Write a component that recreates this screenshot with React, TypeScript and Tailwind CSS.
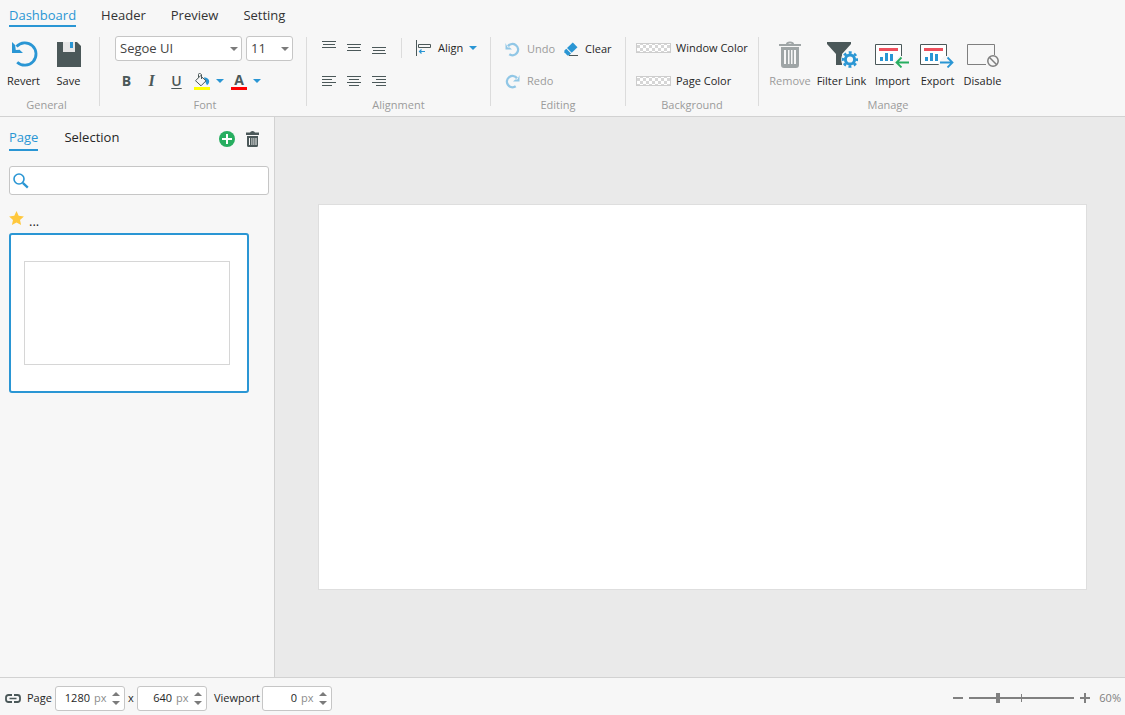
import React, { useState } from 'react'
import clsx from 'clsx'

const DARK = '#4b5859'
const BLUE = '#2a96d4'

/* ---------- icons ---------- */

function RevertIcon() {
  return (
    <svg width="28" height="28" viewBox="0 0 28 28" fill="none">
      <path d="M6.5 6.5A11.2 11.2 0 1 1 7.2 22.200" stroke={BLUE} strokeWidth="2.800" />
      <path d="M2 2v11h11l-3.400-3.200-3.800.2L5.100 5z" fill={BLUE} />
    </svg>
  )
}

function SaveIcon() {
  return (
    <svg width="28" height="28" viewBox="0 0 28 28">
      <path d="M2 2h20l4 4v21H2z" fill={DARK} />
      <path d="M8 2h12v10H8z" fill="#e6e6e6" />
      <path d="M15 2h3v6h-3z" fill={BLUE} />
    </svg>
  )
}

function Caret({ blue = false, className = '' }: { blue?: boolean; className?: string }) {
  return (
    <svg width="8" height="4" viewBox="0 0 8 4" className={clsx('shrink-0', className)}>
      <path d="M0 0h8L4 4z" fill={blue ? BLUE : '#7b7b7b'} />
    </svg>
  )
}

function FillIcon() {
  return (
    <svg width="16" height="17" viewBox="0 0 16 17" fill="none">
      <path d="M10 4.200c3.500.2 5.300 2.100 5.200 4.200-.1 1.500-1 3-2.200 3.800-.7-1.400-1.600-3-2.200-4.700z" fill={BLUE} />
      <path d="M6.500 2.800l5.500 5-5 5-5.500-5.100z" fill="#f7f7f7" stroke={DARK} />
      <path d="M4.500 4.500V1.500Q4.500.5 5.500.5T7.500 1.500V6" stroke={DARK} />
      <path d="M0 14h16v3H0z" fill="#ffff00" />
    </svg>
  )
}

function LinesIcon({ rows }: { rows: [number, number, number][] }) {
  return (
    <svg width="14" height="16" viewBox="0 0 14 16" fill={DARK} shapeRendering="crispEdges">
      {rows.map(([x, y, w]) => (
        <rect key={y} x={x} y={y} width={w} height="1" />
      ))}
    </svg>
  )
}

function AlignObjectsIcon() {
  return (
    <svg width="16" height="16" viewBox="0 0 16 16" fill="none">
      <path d="M.5 0v16M2.500 4.500h12v3h-12z" stroke={DARK} />
      <path d="M3 11.500h6M5.500 9.500l-2 2 2 2" stroke={BLUE} strokeWidth="1.200" />
    </svg>
  )
}

function UndoIcon({ flip = false }: { flip?: boolean }) {
  return (
    <svg width="15" height="15" viewBox="0 0 15 15" fill="none" className={flip ? '-scale-x-100' : ''}>
      <path d="M3 4.200A5.600 5.600 0 1 1 4.300 12.300" stroke="#91c7e6" strokeWidth="2.400" />
      <path d="M.5 1v6.500H7L4.800 5.400 2.600 5.600z" fill="#91c7e6" />
    </svg>
  )
}

function EraserIcon() {
  return (
    <svg width="15" height="15" viewBox="0 0 15 15">
      <path d="M8.800.5l4.700 4.700-5.800 5.600L3 6.100z" fill={BLUE} />
      <path d="M2.300 6.800l4.700 4.700L5 13.400H3.400L.4 10.300V8.600z" fill={BLUE} />
      <path d="M5 13h9v1H5z" fill={DARK} />
    </svg>
  )
}

function RemoveIcon() {
  return (
    <svg width="24" height="28" viewBox="0 0 24 28">
      <path d="M8 4a4 2.500 0 0 1 8 0h7v2H1V4zM10 4h4q-2-1.500-4 0z" fill="#9fa5a6" fillRule="evenodd" />
      <path
        d="M3 7h18v18q0 3-3 3H6q-3 0-3-3zM6 10v14h2V10zM10 10v14h1.500V10zM13 10v14h1.500V10zM16 10v14h2V10z"
        fill="#9fa5a6"
        fillRule="evenodd"
      />
    </svg>
  )
}

function FilterLinkIcon() {
  return (
    <svg width="32" height="28" viewBox="0 0 32 28" fill="none">
      <path d="M1 2h24v2l-9 10v11h-6V14L1 4z" fill={DARK} />
      <circle cx="24" cy="19.500" r="9" fill="#f7f7f7" />
      <circle cx="24" cy="19.500" r="4.600" stroke={BLUE} strokeWidth="3" />
      <circle cx="24" cy="19.500" r="7" stroke={BLUE} strokeWidth="2.600" strokeDasharray="2.900 2.598" strokeDashoffset="1.450" />
    </svg>
  )
}

function TransferIcon({ out = false }: { out?: boolean }) {
  return (
    <svg width="35" height="28" viewBox="0 0 35 28" fill="none">
      <path d="M.5 4.500h26v20H.5z" fill="#fff" stroke={DARK} />
      <path d="M4 8h19v3H4z" fill="#ee4f5c" />
      <path d="M5 17h3v4H5zM10 13h3v8h-3zM15 14h3v7h-3z" fill={BLUE} />
      <path d="M18.500 22.500L24 16h4v12h-9z" fill="#f7f7f7" />
      {out ? (
        <path d="M20 22.500h12M27.500 17.500l5 5-5 5" stroke={BLUE} strokeWidth="1.800" />
      ) : (
        <path d="M34 22.500H22M26.500 17.500l-5 5 5 5" stroke="#27ae60" strokeWidth="1.800" />
      )}
    </svg>
  )
}

function DisableIcon() {
  return (
    <svg width="32" height="28" viewBox="0 0 32 28" fill="none">
      <path d="M19 24.500H.5v-20h27V15" stroke="#7f7f7f" />
      <circle cx="26" cy="21" r="5.200" stroke="#7f7f7f" strokeWidth="1.500" />
      <path d="M22.300 17.300l7.400 7.400" stroke="#7f7f7f" strokeWidth="1.500" />
    </svg>
  )
}

function AddIcon() {
  return (
    <svg width="16" height="16" viewBox="0 0 16 16">
      <circle cx="8" cy="8" r="8" fill="#27ae60" />
      <path d="M3 7h4V3h2v4h4v2H9v4H7V9H3z" fill="#fff" />
    </svg>
  )
}

function TrashIcon() {
  return (
    <svg width="13" height="16" viewBox="0 0 13 16">
      <path d="M4 1.500Q4.500 0 6.500 0T9 1.500h4V4H0V1.500z" fill={DARK} />
      <path d="M1 5h11v9.500q0 1.500-1.500 1.500h-8Q1 16 1 14.500zM3 7v7h1V7zM5.500 7v7h.8V7zM7.500 7v7h.8V7zM9.500 7v7h1V7z" fill={DARK} fillRule="evenodd" />
    </svg>
  )
}

function SearchIcon() {
  return (
    <svg width="16" height="16" viewBox="0 0 16 16" fill="none" stroke={BLUE}>
      <circle cx="6" cy="6" r="5" strokeWidth="1.600" />
      <path d="M9.800 9.800l5 4.800" strokeWidth="2.300" />
    </svg>
  )
}

function StarIcon() {
  return (
    <svg width="15" height="14" viewBox="0 0 15 14">
      <path d="M7.500 0l2.200 4.800 5.200.6-3.900 3.500 1.100 5.100-4.600-2.600L2.900 14 4 8.900.1 5.400l5.200-.6z" fill="#ffc83d" />
    </svg>
  )
}

function LinkIcon() {
  return (
    <svg width="16" height="9" viewBox="0 0 16 9" fill="none" stroke={DARK} strokeWidth="1.800">
      <path d="M7 1H3.500Q1 1 1 3.500v2Q1 8 3.500 8H7M9 1h3.500Q15 1 15 3.500v2Q15 8 12.500 8H9" />
      <path d="M4.500 4.500h7" strokeWidth="1.500" />
    </svg>
  )
}

/* ---------- ribbon parts ---------- */

function Group({ label, className, children }: { label: string; className: string; children: React.ReactNode }) {
  return (
    <section aria-label={label} className={clsx('shrink-0', className)}>
      <div className="h-16">{children}</div>
      <div className="text-center text-[11px] leading-[18px] text-[#9b9b9b]">{label}</div>
    </section>
  )
}

function Divider() {
  return <div className="mt-[5px] h-[69px] w-px shrink-0 bg-[#dcdcdc]" />
}

function BigButton({ label, icon, className = 'w-[45px]', disabled = false }: { label: string; icon: React.ReactNode; className?: string; disabled?: boolean }) {
  return (
    <button
      disabled={disabled}
      className={clsx('flex flex-col items-center gap-1 whitespace-nowrap pt-2 text-[11px] leading-[18px]', className, disabled && 'text-[#9b9b9b]')}
    >
      {icon}
      <span>{label}</span>
    </button>
  )
}

function Select({ label, value, className }: { label: string; value: string; className: string }) {
  return (
    <div className={clsx('relative', className)}>
      <select
        aria-label={label}
        defaultValue={value}
        className="h-[25px] w-full appearance-none rounded-[3px] border border-[#c6c6c6] bg-white pl-1 text-[13px] text-[#444]"
      >
        <option>{value}</option>
      </select>
      <Caret className="pointer-events-none absolute top-[11px] right-1" />
    </div>
  )
}

const alignIcons: { label: string; rows: [number, number, number][] }[] = [
  { label: 'Align top', rows: [[0, 1, 14], [1, 4, 12], [0, 7, 14]] },
  { label: 'Align middle', rows: [[0, 4, 14], [1, 7, 12], [0, 10, 14]] },
  { label: 'Align bottom', rows: [[0, 7, 14], [1, 10, 12], [0, 13, 14]] },
  { label: 'Align left', rows: [[0, 4, 14], [0, 7, 10], [0, 10, 14], [0, 13, 10]] },
  { label: 'Align center', rows: [[0, 4, 14], [2, 7, 10], [0, 10, 14], [2, 13, 10]] },
  { label: 'Align right', rows: [[0, 4, 14], [4, 7, 10], [0, 10, 14], [4, 13, 10]] },
]

function ColorButton({ label }: { label: string }) {
  return (
    <button className="flex h-8 items-center gap-[5px] whitespace-nowrap">
      <svg width="35" height="10" viewBox="0 0 35 10" shapeRendering="crispEdges">
        <defs>
          <pattern id="checker" width="6" height="6" patternUnits="userSpaceOnUse" x="1" y="2">
            <path d="M0 0h6v6H0z" fill="#fff" />
            <path d="M0 0h3v3H0zM3 3h3v3H3z" fill="#d6d6d6" />
          </pattern>
        </defs>
        <path d="M0 0h35v10H0z" fill="#cdcdcd" />
        <path d="M1 1h33v8H1z" fill="url(#checker)" />
      </svg>
      {label}
    </button>
  )
}

function Ribbon() {
  return (
    <div className="flex h-[84px] items-start">
      <Group label="General" className="w-[99px] pr-[6px]">
        <div className="flex pl-px">
          <BigButton label="Revert" icon={<RevertIcon />} />
          <BigButton label="Save" icon={<SaveIcon />} />
        </div>
      </Group>
      <Divider />

      <Group label="Font" className="w-[206px] pl-1">
        <div className="flex gap-1 pt-1 pl-[11px]">
          <Select label="Font family" value="Segoe UI" className="w-[127px]" />
          <Select label="Font size" value="11" className="w-[47px]" />
        </div>
        <div className="flex h-10 items-center pl-[10px] text-sm text-[#4b5859]">
          <button aria-label="Bold" className="w-[25px] font-bold">B</button>
          <button aria-label="Italic" className="w-[25px] font-['Liberation_Serif',serif] text-base font-bold italic">I</button>
          <button aria-label="Underline" className="w-[25px] font-semibold underline underline-offset-2">U</button>
          <button aria-label="Fill color" className="flex w-[37px] items-center gap-[6px] pl-[5px]">
            <FillIcon />
            <Caret blue />
          </button>
          <button aria-label="Text color" className="flex w-[37px] items-center gap-[6px] pl-[5px]">
            <span className="w-4 border-b-3 border-[#ff0000] text-center leading-[14px] font-bold">A</span>
            <Caret blue />
          </button>
        </div>
      </Group>
      <Divider />

      <Group label="Alignment" className="w-[183px]">
        <div className="flex items-start pl-[9px]">
          <div className="grid w-[75px] grid-cols-3">
            {alignIcons.map((icon) => (
              <button key={icon.label} aria-label={icon.label} className="flex h-8 items-center justify-center">
                <LinesIcon rows={icon.rows} />
              </button>
            ))}
          </div>
          <div className="mt-[6px] ml-[10px] h-5 w-px bg-[#dcdcdc]" />
          <button className="ml-[14px] flex h-8 items-center gap-[6px]">
            <AlignObjectsIcon />
            Align
            <Caret blue />
          </button>
        </div>
      </Group>
      <Divider />

      <Group label="Editing" className="w-[134px]">
        <div className="grid grid-cols-[59px_1fr] pt-px pl-[14px]">
          <button disabled className="flex h-8 items-center gap-[7px] text-[#9b9b9b]">
            <UndoIcon />
            Undo
          </button>
          <button className="flex h-8 items-center gap-[6px]">
            <EraserIcon />
            Clear
          </button>
          <button disabled className="flex h-8 items-center gap-[7px] text-[#9b9b9b]">
            <UndoIcon flip />
            Redo
          </button>
        </div>
      </Group>
      <Divider />

      <Group label="Background" className="w-[132px]">
        <div className="flex flex-col items-start gap-px pl-[10px]">
          <ColorButton label="Window Color" />
          <ColorButton label="Page Color" />
        </div>
      </Group>
      <Divider />

      <Group label="Manage" className="w-[258px]">
        <div className="flex pl-2">
          <BigButton label="Remove" icon={<RemoveIcon />} className="w-[46px]" disabled />
          <BigButton label="Filter Link" icon={<FilterLinkIcon />} className="w-[57px]" />
          <BigButton label="Import" icon={<TransferIcon />} />
          <BigButton label="Export" icon={<TransferIcon out />} />
          <BigButton label="Disable" icon={<DisableIcon />} />
        </div>
      </Group>
    </div>
  )
}

/* ---------- side panel ---------- */

function SidePanel() {
  return (
    <aside className="w-[275px] shrink-0 border-r border-[#d2d2d2] pl-[9px]">
      <div className="flex items-start pt-[9px] text-[13px] leading-[22px]">
        <button className="border-b-2 border-[#2a96d4] pb-px text-[#2a96d4]">Page</button>
        <button className="ml-[26px]">Selection</button>
        <button aria-label="Add page" className="mt-[5px] ml-auto">
          <AddIcon />
        </button>
        <button aria-label="Delete page" className="mt-[5px] mr-[15px] ml-[11px]">
          <TrashIcon />
        </button>
      </div>

      <div className="mt-[15px] mr-[5px] flex h-[29px] items-center rounded-[3px] border border-[#c6c6c6] bg-white pl-[3px]">
        <SearchIcon />
        <input aria-label="Search pages" className="h-full min-w-0 flex-1 px-2 outline-none" />
      </div>

      <div className="mt-4 flex h-[22px] items-start gap-[5px]">
        <StarIcon />
        <span className="text-[13px] leading-5">...</span>
      </div>
      <button aria-label="Page thumbnail" className="flex h-[160px] w-[240px] items-center rounded-[3px] border-2 border-[#2a96d4] bg-white pl-[13px]">
        <span className="h-[104px] w-[206px] border border-[#d6d6d6]" />
      </button>
    </aside>
  )
}

/* ---------- status bar ---------- */

function PixelInput({ label, initial }: { label: string; initial: number }) {
  const [value, setValue] = useState(initial)
  return (
    <div className="flex h-[25px] w-[70px] items-center rounded-[3px] border border-[#c6c6c6] bg-white">
      <input
        aria-label={label}
        value={value}
        onChange={(e) => setValue(Number(e.target.value) || 0)}
        className="w-[34px] text-right outline-none"
      />
      <span className="ml-1 text-[#8c8c8c]">px</span>
      <div className="mr-1 ml-auto flex flex-col gap-[5px]">
        <button aria-label={`Increase ${label}`} onClick={() => setValue(value + 1)}>
          <Caret className="rotate-180" />
        </button>
        <button aria-label={`Decrease ${label}`} onClick={() => setValue(Math.max(0, value - 1))}>
          <Caret />
        </button>
      </div>
    </div>
  )
}

function StatusBar() {
  return (
    <footer className="flex h-[38px] items-center border-t border-[#d2d2d2] pt-[3px] pr-1 pl-[5px]">
      <LinkIcon />
      <span className="ml-[6px] w-7">Page</span>
      <PixelInput label="page width" initial={1280} />
      <span className="w-3 text-center">x</span>
      <PixelInput label="page height" initial={640} />
      <span className="ml-[7px] w-12">Viewport</span>
      <PixelInput label="viewport" initial={0} />

      <div className="ml-auto flex items-center">
        <button aria-label="Zoom out" className="mr-[6px] flex h-5 w-[10px] items-center">
          <span className="h-0.5 w-full bg-[#808080]" />
        </button>
        <div className="relative flex h-5 w-[105px] items-center">
          <input
            type="range"
            aria-label="Zoom"
            min={0}
            max={100}
            defaultValue={26}
            className="h-0.5 w-full appearance-none bg-[#808080] [&::-webkit-slider-thumb]:h-[10px] [&::-webkit-slider-thumb]:w-[4px] [&::-webkit-slider-thumb]:appearance-none [&::-webkit-slider-thumb]:bg-[#808080]"
          />
          <span className="pointer-events-none absolute top-[6px] left-[52px] h-2 w-px bg-[#808080]" />
        </div>
        <button aria-label="Zoom in" className="ml-[6px]">
          <svg width="10" height="10" viewBox="0 0 10 10">
            <path d="M4 0h2v4h4v2H6v4H4V6H0V4h4z" fill="#808080" />
          </svg>
        </button>
        <span className="ml-[9px] text-[#808080]">60%</span>
      </div>
    </footer>
  )
}

const menu = ['Dashboard', 'Header', 'Preview', 'Setting']

export default function App() {
  return (
    <div className="flex min-h-screen flex-col bg-[#f7f7f7] font-['Open_Sans','Noto_Sans',sans-serif] text-[11px] text-[#262626]">
      <header className="border-b border-[#d2d2d2]">
        <nav className="flex h-8 items-start gap-[25px] pt-[5px] pl-[9px] text-[13px] leading-5 text-[#333]">
          {menu.map((item, i) => (
            <button key={item} className={clsx('border-b-2', i === 0 ? 'border-[#2a96d4] text-[#2a96d4]' : 'border-transparent')}>
              {item}
            </button>
          ))}
        </nav>
        <Ribbon />
      </header>

      <div className="flex flex-1">
        <SidePanel />
        <main className="flex min-w-0 flex-1 items-center justify-center bg-[#eaeaea] pl-[5px]">
          <div className="h-[386px] w-[769px] max-w-full border border-[#dedede] bg-white" />
        </main>
      </div>

      <StatusBar />
    </div>
  )
}
